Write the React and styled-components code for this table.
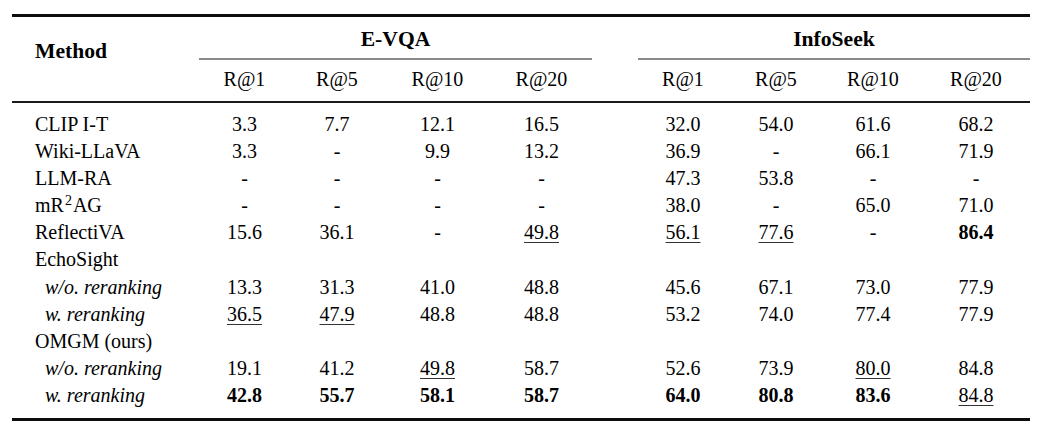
import React from 'react';
import styled, { createGlobalStyle } from 'styled-components';

const SERIF = '"Liberation Serif", "Tinos", "Times New Roman", serif';

const GlobalStyle = createGlobalStyle`
  html, body { margin: 0; padding: 0; background: #fff; }
  body { font-family: ${SERIF}; color: #000; }
`;

const COLS = '187px 91px 94px 107px 101px 46px 90px 96px 98px 108px';

const Table = styled.div`
  margin: 14px 0 0 12px;
  width: 1018px;
  border-top: 3px solid #0d0d0d;
  border-bottom: 3px solid #0d0d0d;
  font-family: ${SERIF};
  font-size: 20px;
  color: #000;
`;

const Header = styled.div`
  display: grid;
  grid-template-columns: ${COLS};
  grid-template-rows: auto auto;
  border-bottom: 2px solid #1a1a1a;
`;

const MethodHead = styled.div`
  grid-column: 1;
  grid-row: 1 / span 2;
  align-self: start;
  padding: 22px 0 0 23px;
  line-height: 24px;
  font-weight: bold;
  font-size: 21.6px;
`;

const GroupHead = styled.div`
  grid-column: ${(p) => p.$col} / span 4;
  grid-row: 1;
  padding-top: 10px;
  padding-bottom: 7px;
  line-height: 24px;
  text-align: center;
  font-weight: bold;
  font-size: 21.6px;
  border-bottom: 2px solid #8a8a8a;
`;

const SubHead = styled.div`
  grid-row: 2;
  grid-column: ${(p) => p.$col};
  padding: 7px 0 10px;
  line-height: 24px;
  text-align: center;
`;

const Body = styled.div`
  padding: 8px 0 9px;
`;

const Row = styled.div`
  display: grid;
  grid-template-columns: ${COLS};
  height: 27.1px;
  line-height: 27px;
`;

const Name = styled.div`
  padding-left: ${(p) => (p.$sub ? '33px' : '23px')};
  font-style: ${(p) => (p.$sub ? 'italic' : 'normal')};
  white-space: nowrap;
`;

const Cell = styled.div`
  text-align: center;
  font-weight: ${(p) => (p.$b ? 'bold' : 'normal')};
`;

const Value = styled.span`
  text-decoration: ${(p) => (p.$u ? 'underline' : 'none')};
  text-decoration-thickness: 1px;
  text-underline-offset: 3px;
  text-decoration-color: #333;
`;

const Sup = styled.sup`
  font-size: 14px;
  line-height: 0;
  vertical-align: 7px;
  padding: 0 1px;
`;

const Spacer = styled.div``;

const parse = (s) => {
  if (!s) return { v: '' };
  if (s.startsWith('*')) return { v: s.slice(1), b: true };
  if (s.startsWith('_')) return { v: s.slice(1), u: true };
  return { v: s };
};

const rows = [
  { name: 'CLIP I-T', e: ['3.3', '7.7', '12.1', '16.5'], i: ['32.0', '54.0', '61.6', '68.2'] },
  { name: 'Wiki-LLaVA', e: ['3.3', '-', '9.9', '13.2'], i: ['36.9', '-', '66.1', '71.9'] },
  { name: 'LLM-RA', e: ['-', '-', '-', '-'], i: ['47.3', '53.8', '-', '-'] },
  { name: 'mR2AG', e: ['-', '-', '-', '-'], i: ['38.0', '-', '65.0', '71.0'] },
  { name: 'ReflectiVA', e: ['15.6', '36.1', '-', '_49.8'], i: ['_56.1', '_77.6', '-', '*86.4'] },
  { name: 'EchoSight', e: ['', '', '', ''], i: ['', '', '', ''] },
  { name: 'w/o. reranking', sub: true, e: ['13.3', '31.3', '41.0', '48.8'], i: ['45.6', '67.1', '73.0', '77.9'] },
  { name: 'w. reranking', sub: true, e: ['_36.5', '_47.9', '48.8', '48.8'], i: ['53.2', '74.0', '77.4', '77.9'] },
  { name: 'OMGM (ours)', e: ['', '', '', ''], i: ['', '', '', ''] },
  { name: 'w/o. reranking', sub: true, e: ['19.1', '41.2', '_49.8', '58.7'], i: ['52.6', '73.9', '_80.0', '84.8'] },
  { name: 'w. reranking', sub: true, e: ['*42.8', '*55.7', '*58.1', '*58.7'], i: ['*64.0', '*80.8', '*83.6', '_84.8'] },
];

const metrics = ['R@1', 'R@5', 'R@10', 'R@20'];

const renderName = (name) =>
  name === 'mR2AG' ? (
    <>
      mR<Sup>2</Sup>AG
    </>
  ) : (
    name
  );

const DataCell = ({ s }) => {
  const c = parse(s);
  return (
    <Cell $b={c.b}>
      <Value $u={c.u}>{c.v}</Value>
    </Cell>
  );
};

export default function App() {
  return (
    <>
      <GlobalStyle />
      <Table>
        <Header>
          <MethodHead>Method</MethodHead>
          <GroupHead $col={2}>E-VQA</GroupHead>
          <GroupHead $col={7}>InfoSeek</GroupHead>
          {metrics.map((m, k) => (
            <SubHead key={'e' + m} $col={2 + k}>{m}</SubHead>
          ))}
          {metrics.map((m, k) => (
            <SubHead key={'i' + m} $col={7 + k}>{m}</SubHead>
          ))}
        </Header>
        <Body>
          {rows.map((r, idx) => (
            <Row key={idx}>
              <Name $sub={r.sub}>{renderName(r.name)}</Name>
              {r.e.map((s, k) => (
                <DataCell key={'e' + k} s={s} />
              ))}
              <Spacer />
              {r.i.map((s, k) => (
                <DataCell key={'i' + k} s={s} />
              ))}
            </Row>
          ))}
        </Body>
      </Table>
    </>
  );
}
